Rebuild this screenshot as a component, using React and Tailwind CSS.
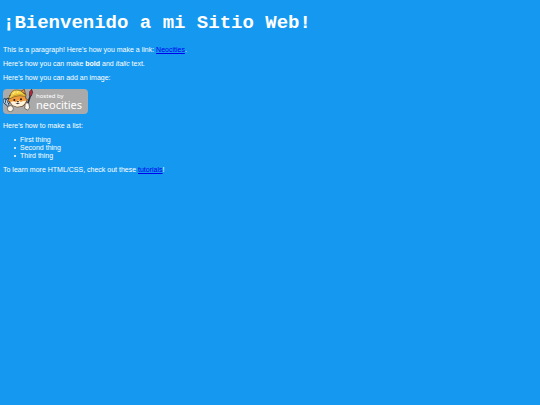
import React from 'react';

const things = ['First thing', 'Second thing', 'Third thing'];

const Mascot = () => (
    <svg viewBox="9 12 99 75" className="h-[25px] w-[33px] shrink-0" aria-hidden="true">
        {/* fork */}
        <path d="M13 43v9l7 6 6-5-2-12M18 43l3 14 8 12" fill="none" stroke="#17324f" strokeWidth="6" strokeLinecap="round" />
        <path d="M13 43v9l7 5 5-4-2-11M18 44l3 13 7 11" fill="none" stroke="#d5e8f5" strokeWidth="3" />
        {/* brush */}
        <path d="M82 60l9-28" stroke="#222c3b" strokeWidth="5" />
        <path d="M88 32l1-12 6-7 3 9-4 11z" fill="#b02a3c" stroke="#3b1e2b" strokeWidth="2" />
        {/* head and ears */}
        <path d="M62 19l11-6 3 14zM29 30l-1 12-5 5 7 4 7 10 14 5 16-2 10-8 5-13-5-3 0-12z" fill="#f09a3c" stroke="#4a2f1c" strokeWidth="2" strokeLinejoin="round" />
        <path d="M31 51l9-2 8 3 7-6 7 5 8-3 8-1-4 9-9 7-14 2-13-4z" fill="#fff4df" />
        <circle cx="43" cy="45" r="3" fill="#21191a" />
        <circle cx="63" cy="43" r="3" fill="#21191a" />
        <path d="M50 49l7-1-3 5zM46 55l7 3 7-4" fill="#21191a" />
        {/* helmet */}
        <path d="M31 32c1-11 8-17 19-17 10 0 17 4 21 11l7 3-1 5-19-2-15 3-13 6-3-4z" fill="#f5cf45" stroke="#67501e" strokeWidth="2" />
        <path d="M39 27l6-8M52 24l3-6" stroke="#fff3a5" strokeWidth="3" />
        <path d="M37 34l13-4 18-1" fill="none" stroke="#b88722" strokeWidth="2" />
        {/* paws */}
        <ellipse cx="31" cy="71" rx="9" ry="9" fill="#fff7e9" stroke="#454344" strokeWidth="2" />
        <path d="M76 54h10l3 15-7 6-8-5z" fill="#fff7e9" stroke="#454344" strokeWidth="2" strokeLinejoin="round" />
    </svg>
);

const NeocitiesBadge = () => (
    <div className="flex h-[25px] w-[85px] rounded bg-[#aaaaaa] text-white">
        <Mascot />
        <div className="flex flex-col pt-1 font-['Noto_Sans',sans-serif]">
            <span className="text-[6px] leading-[7px]">hosted by</span>
            <span className="text-[11px] leading-[10px]">neocities</span>
        </div>
    </div>
);

const App = () => {
    return (
        <div className="min-h-screen bg-[#1599f0] px-[3px] pt-3 font-['Liberation_Sans',sans-serif] text-[7px] leading-[8px] text-white">
            <h1 className="mb-3 font-['Courier_New','Liberation_Mono',monospace] text-[19px] leading-[22px] font-bold">
                ¡Bienvenido a mi Sitio Web!
            </h1>
            <div className="flex flex-col gap-[6px]">
                <p>
                    This is a paragraph! Here's how you make a link:{' '}
                    <a href="#neocities" className="text-[#0000ee] underline">Neocities</a>.
                </p>
                <p>
                    Here's how you can make <strong>bold</strong> and <em>italic</em> text.
                </p>
                <p>Here's how you can add an image:</p>
                <div className="pt-px pb-[2px]">
                    <NeocitiesBadge />
                </div>
                <p>Here's how to make a list:</p>
                <ul className="pl-[11px]">
                    {things.map((thing) => (
                        <li key={thing} className="flex items-center gap-1 before:size-[2px] before:rounded-full before:bg-white">
                            {thing}
                        </li>
                    ))}
                </ul>
                <p>
                    To learn more HTML/CSS, check out these{' '}
                    <a href="#tutorials" className="text-[#0000ee] underline">tutorials</a>!
                </p>
            </div>
        </div>
    );
};

export default App;
